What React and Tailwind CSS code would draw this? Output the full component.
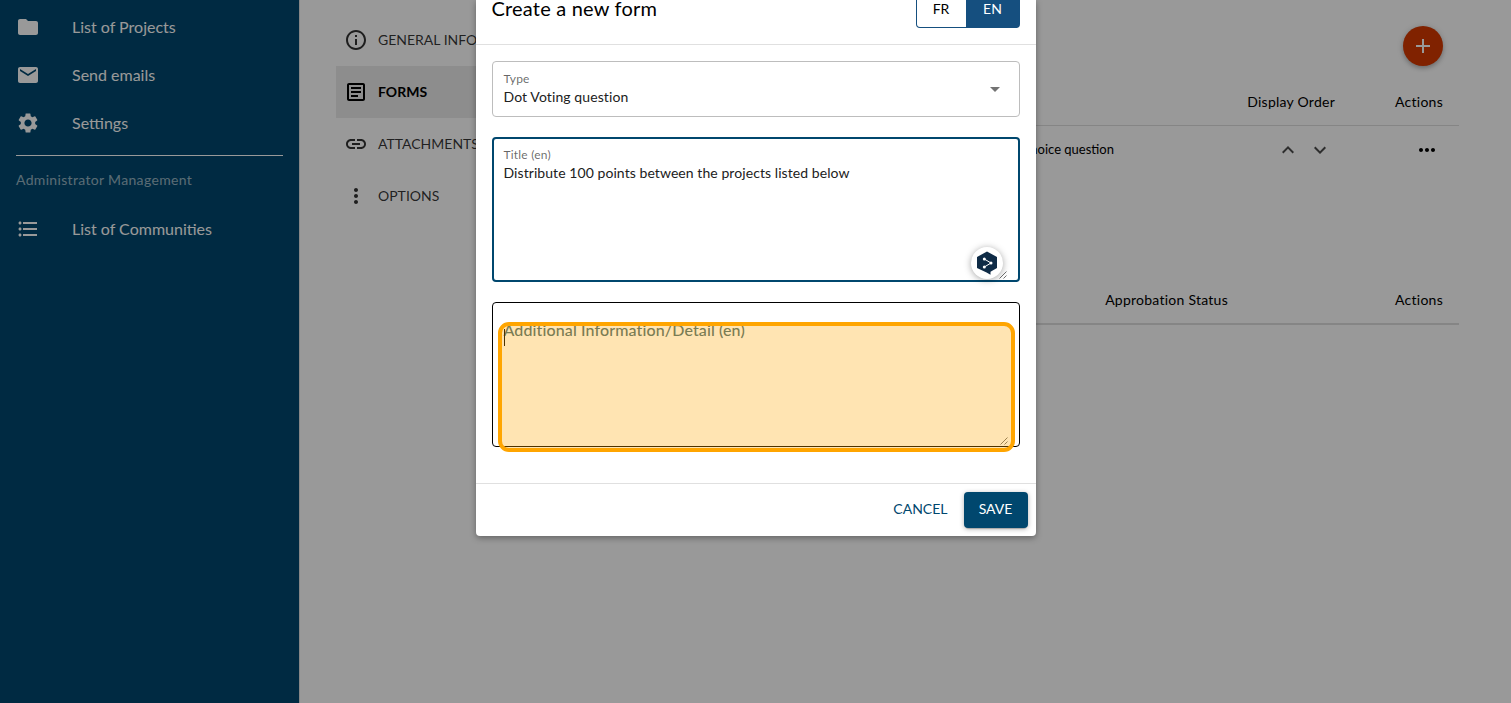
import React, { useState } from 'react';
import {
  MdFolder,
  MdEmail,
  MdSettings,
  MdFormatListBulleted,
  MdInfoOutline,
  MdOutlineArticle,
  MdLink,
  MdMoreVert,
  MdMoreHoriz,
  MdAdd,
  MdExpandLess,
  MdExpandMore,
  MdArrowDropDown,
} from 'react-icons/md';

const mainLinks = [
  { label: 'List of Projects', icon: MdFolder },
  { label: 'Send emails', icon: MdEmail },
  { label: 'Settings', icon: MdSettings },
];

const tabs = [
  { label: 'GENERAL INFORMATION', icon: MdInfoOutline },
  { label: 'FORMS', icon: MdOutlineArticle },
  { label: 'ATTACHMENTS', icon: MdLink },
  { label: 'OPTIONS', icon: MdMoreVert },
];

const SidebarLink = ({ label, icon: Icon }) => (
  <a href="#" className="flex h-12 items-center gap-8 px-4 text-base text-white">
    <Icon className="h-6 w-6" />
    <span>{label}</span>
  </a>
);

const Sidebar = () => (
  <nav className="w-[300px] shrink-0 border-r border-[#e0e0e0] bg-[#00476e] pt-[3px]">
    {mainLinks.map((link) => (
      <SidebarLink key={link.label} {...link} />
    ))}
    <div className="mx-4 mt-2 h-px bg-white"></div>
    <p className="flex h-[49px] items-center px-4 pb-0.5 text-sm tracking-[0.33px] text-white/60">
      Administrator Management
    </p>
    <SidebarLink label="List of Communities" icon={MdFormatListBulleted} />
  </nav>
);

const TabList = ({ active }) => (
  <div className="w-[220px] shrink-0 pt-3.5">
    {tabs.map(({ label, icon: Icon }) => (
      <a
        key={label}
        href="#"
        className={`flex h-[52px] items-center gap-2.5 pl-2 text-sm whitespace-nowrap ${
          label === active ? 'bg-[#ebebeb] font-bold text-black' : 'text-black/80'
        }`}
      >
        <Icon className="h-6 w-6" />
        <span>{label}</span>
      </a>
    ))}
  </div>
);

const FormTables = () => (
  <div className="flex grow flex-col">
    <div className="flex justify-end pt-[26px] pr-4">
      <button className="flex h-10 w-10 items-center justify-center rounded-full bg-[#d53900] text-white shadow-[0_3px_5px_-1px_rgba(0,0,0,0.2),0_1px_6px_rgba(0,0,0,0.2)]">
        <MdAdd className="h-6 w-6" />
      </button>
    </div>

    <div className="mt-3 flex h-12 items-center justify-end border-b border-[#dedede] pr-4 text-sm tracking-[0.25px]">
      <span>Display Order</span>
      <span className="w-[108px] text-right">Actions</span>
    </div>
    <div className="flex h-12 items-center justify-end pr-4 text-[13px]">
      <span>Multiple choice question</span>
      <div className="ml-[162px] flex gap-2 text-black/70">
        <MdExpandLess className="h-6 w-6" />
        <MdExpandMore className="h-6 w-6" />
      </div>
      <MdMoreHoriz className="mr-1 ml-[83px] h-6 w-6" />
    </div>

    <div className="mt-[102px] flex h-[49px] items-center justify-end border-b-2 border-[#dedede] pr-4 text-sm tracking-[0.25px]">
      <span>Approbation Status</span>
      <span className="w-[215px] text-right">Actions</span>
    </div>
  </div>
);

const ResizeHandle = () => (
  <svg className="absolute right-[11px] bottom-px h-2 w-2 text-black/70" viewBox="0 0 8 8" stroke="currentColor" strokeWidth="0.8">
    <path d="M0.5 7.5L7.5 0.5M4.5 7.5L7.5 4.5" />
  </svg>
);

const TranslateBadge = () => (
  <div className="absolute right-[15px] bottom-px flex h-8 w-8 items-center justify-center rounded-full bg-white shadow-[0_1px_7px_rgba(0,0,0,0.35)]">
    <svg className="h-6 w-5" viewBox="0 0 20 24" fill="none">
      <path d="M10 0.5L20 6V17L13.5 20.7V23.8L9.6 21.6L0 17V6Z" fill="#0f2b46" />
      <path d="M7.3 8L14 12L7.3 16" stroke="white" strokeWidth="1" />
      <circle cx="7.3" cy="8" r="1.5" fill="white" />
      <circle cx="14" cy="12" r="1.5" fill="white" />
      <circle cx="7.3" cy="16" r="1.5" fill="white" />
    </svg>
  </div>
);

const FormDialog = () => {
  const [lang, setLang] = useState('EN');

  return (
    <div className="flex h-[536px] w-[560px] flex-col rounded-b bg-white shadow-[0_2px_6px_rgba(0,0,0,0.35)]">
      <header className="flex h-[45px] items-start justify-between border-b border-[#e0e0e0] px-4">
        <h2 className="-mt-1.5 text-xl leading-7 tracking-[0.2px]">Create a new form</h2>
        <div className="flex h-7 rounded-b border border-t-0 border-[#154f7f] text-sm leading-[18px]">
          {['FR', 'EN'].map((code) => (
            <button
              key={code}
              onClick={() => setLang(code)}
              className={`flex items-start justify-center ${
                code === lang ? 'w-[53px] bg-[#154f7f] pl-px text-white' : 'w-[49px]'
              }`}
            >
              {code}
            </button>
          ))}
        </div>
      </header>

      <div className="flex grow flex-col gap-5 px-4 pt-4 text-[#212121]">
        <div className="flex h-14 items-center justify-between rounded border border-[#bdbdbd] pr-3 pl-[11px]">
          <div>
            <p className="text-xs leading-4 tracking-[0.2px] text-black/60">Type</p>
            <p className="text-sm leading-5 tracking-[0.1px]">Dot Voting question</p>
          </div>
          <MdArrowDropDown className="h-6 w-6 text-black/55" />
        </div>

        <div className="relative h-[145px] rounded border-2 border-[#00476e] px-2.5 pt-2">
          <p className="text-xs leading-4 tracking-[0.2px] text-black/60">Title (en)</p>
          <p className="text-sm leading-5 tracking-[0.07px]">Distribute 100 points between the projects listed below</p>
          <ResizeHandle />
          <TranslateBadge />
        </div>

        <div className="relative h-[145px] rounded border border-black px-[11px] pt-[17px]">
          <p className="text-base leading-5 font-medium tracking-[0.12px] text-[#3f6a78]">
            Additional Information/Detail (en)
          </p>
          <span className="absolute top-[26px] left-[11px] h-[17px] w-px bg-black"></span>
          <ResizeHandle />
          {/* highlight over the empty text area */}
          <div className="absolute -bottom-1.5 left-[5px] h-[130px] w-[517px] rounded-[11px] border-4 border-[#ffa500] bg-[#ffa500]/30"></div>
        </div>
      </div>

      <footer className="flex h-[53px] items-center justify-end gap-4 border-t border-[#e0e0e0] px-2 text-sm">
        <button className="pb-0.5 text-[#00476e]">CANCEL</button>
        <button className="h-9 w-16 rounded bg-[#00476e] pb-0.5 text-white shadow-[0_3px_1px_-2px_rgba(0,0,0,0.2),0_1px_5px_rgba(0,0,0,0.3)]">
          SAVE
        </button>
      </footer>
    </div>
  );
};

const App = () => {
  return (
    <div className="relative h-[703px] overflow-hidden bg-white font-['Lato',sans-serif] text-black">
      <div className="flex h-full">
        <Sidebar />
        <main className="flex grow pr-[52px] pl-9">
          <TabList active="FORMS" />
          <FormTables />
        </main>
      </div>

      {/* modal backdrop */}
      <div className="absolute inset-0 flex items-start justify-center bg-black/40">
        <FormDialog />
      </div>
    </div>
  );
};

export default App;
